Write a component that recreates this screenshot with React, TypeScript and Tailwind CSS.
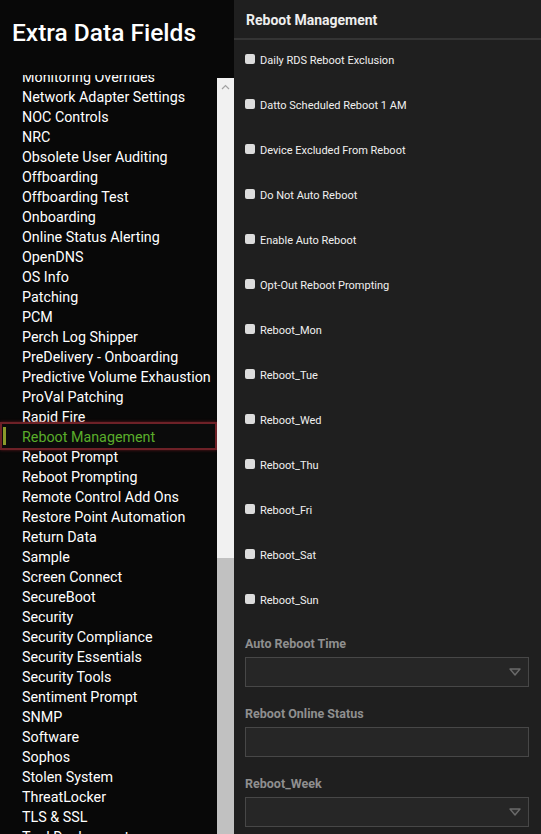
import React from "react";

const FIELDS = [
  "Monitoring Overrides",
  "Network Adapter Settings",
  "NOC Controls",
  "NRC",
  "Obsolete User Auditing",
  "Offboarding",
  "Offboarding Test",
  "Onboarding",
  "Online Status Alerting",
  "OpenDNS",
  "OS Info",
  "Patching",
  "PCM",
  "Perch Log Shipper",
  "PreDelivery - Onboarding",
  "Predictive Volume Exhaustion",
  "ProVal Patching",
  "Rapid Fire",
  "Reboot Management",
  "Reboot Prompt",
  "Reboot Prompting",
  "Remote Control Add Ons",
  "Restore Point Automation",
  "Return Data",
  "Sample",
  "Screen Connect",
  "SecureBoot",
  "Security",
  "Security Compliance",
  "Security Essentials",
  "Security Tools",
  "Sentiment Prompt",
  "SNMP",
  "Software",
  "Sophos",
  "Stolen System",
  "ThreatLocker",
  "TLS & SSL",
  "Tool Deployment",
];

const ACTIVE = "Reboot Management";

const CHECKS = [
  "Daily RDS Reboot Exclusion",
  "Datto Scheduled Reboot 1 AM",
  "Device Excluded From Reboot",
  "Do Not Auto Reboot",
  "Enable Auto Reboot",
  "Opt-Out Reboot Prompting",
  "Reboot_Mon",
  "Reboot_Tue",
  "Reboot_Wed",
  "Reboot_Thu",
  "Reboot_Fri",
  "Reboot_Sat",
  "Reboot_Sun",
];

function Caret() {
  return (
    <svg width="12" height="8" viewBox="0 0 12 8" className="text-[#6a6a6a]">
      <path d="M1 1 L11 1 L6 7 Z" fill="#303030" stroke="currentColor" strokeWidth="1.4" strokeLinejoin="round" />
    </svg>
  );
}

function Sidebar() {
  return (
    <aside className="flex flex-col w-[234px] h-full bg-[#080808] shrink-0">
      <div className="h-[75px] shrink-0 pl-[12px] pt-[16px]">
        <h1 className="text-[24.5px] leading-[34px] font-medium text-white">
          Extra Data Fields
        </h1>
      </div>
      <div className="flex flex-1 min-h-0">
        <ul className="flex-1 overflow-hidden">
          <div className="-mt-[8px]">
            {FIELDS.map((f) => {
              const isActive = f === ACTIVE;
              return (
                <li key={f} className="relative h-[20px] leading-[20px] pl-[22px] text-[14.3px] whitespace-nowrap">
                  {isActive && (
                    <div className="absolute left-0 right-0 -top-[5px] -bottom-[3px] border-2 border-[#6e2127] bg-[#0b0b0b] shadow-[0_0_3px_rgba(140,30,40,0.7)]">
                      <div className="absolute left-[1px] top-[3px] bottom-[3px] w-[3px] bg-[#8a9a2a]" />
                    </div>
                  )}
                  <span className={isActive ? "relative text-[#5aad2a]" : "relative text-white"}>{f}</span>
                </li>
              );
            })}
          </div>
        </ul>
        <div className="flex flex-col w-[17px] shrink-0 mt-[3px] bg-[#f1f1f1]">
          <div className="flex justify-center h-[17px] items-center">
            <svg width="9" height="6" viewBox="0 0 9 6">
              <path d="M1 5 L4.5 1.5 L8 5" fill="none" stroke="#a3a3a3" strokeWidth="1.2" />
            </svg>
          </div>
          <div className="h-[463px]" />
          <div className="flex-1 bg-[#c1c1c1]" />
        </div>
      </div>
    </aside>
  );
}

function Field({ label, select }: { label: string; select?: boolean }) {
  return (
    <div className="flex flex-col">
      <div className="text-[12.5px] leading-[20px] font-bold text-[#8f8f8f]">{label}</div>
      <div className="mt-[3px] mr-[12px] h-[30px] border border-[#474747] bg-[#262626] flex items-center justify-end pr-[7px]">
        {select && <Caret />}
      </div>
    </div>
  );
}

function Panel() {
  return (
    <main className="flex-1 h-full bg-[#1f1f1f] flex flex-col min-w-0">
      <div className="h-[40px] shrink-0 border-b-2 border-[#343434] pl-[12px] pt-[2px] flex items-center">
        <h2 className="text-[14px] font-bold text-[#eeeeee]">Reboot Management</h2>
      </div>
      <div className="pl-[11px] pt-[12px]">
        {CHECKS.map((c) => (
          <div key={c} className="h-[45px] flex items-start gap-[5px]">
            <span className="mt-[2px] w-[10px] h-[10px] rounded-[2px] bg-[#dcdcdc] shrink-0" />
            <span className="text-[11px] leading-[18px] text-[#f0f0f0]">{c}</span>
          </div>
        ))}
        <div className="-mt-[3px] flex flex-col gap-[17px]">
          <Field label="Auto Reboot Time" select />
          <Field label="Reboot Online Status" />
          <Field label="Reboot_Week" select />
        </div>
      </div>
    </main>
  );
}

export default function App() {
  return (
    <div className="flex w-[541px] h-[834px] overflow-hidden font-['Roboto',sans-serif]">
      <Sidebar />
      <Panel />
    </div>
  );
}
